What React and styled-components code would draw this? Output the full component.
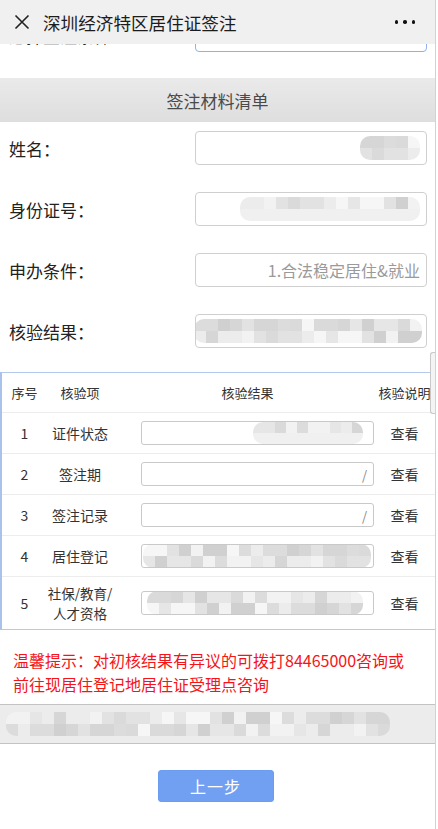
import React from "react";
import styled, { createGlobalStyle } from "styled-components";

const Global = createGlobalStyle`
  html, body { margin: 0; padding: 0; background: #fff; }
  body { font-family: "Noto Sans CJK SC", "Noto Sans", sans-serif; color: #222; }
  * { box-sizing: border-box; }
`;

const Page = styled.div`
  position: relative;
  width: 436px;
  height: 829px;
  overflow: hidden;
  border-right: 1px solid #d2d2d2;
  background: #fff;
`;

const Header = styled.div`
  position: absolute;
  top: 0;
  left: 0;
  right: 0;
  height: 44px;
  background: #f0f0f0;
  display: flex;
  align-items: center;
  padding: 0 14px;
  z-index: 5;
`;

const Title = styled.div`
  margin-left: 13px;
  font-size: 17.6px;
  color: #1c1c1c;
  flex: 1;
`;

const Dots = styled.div`
  display: flex;
  gap: 5px;
  margin-right: 6px;
`;

const Dot = styled.span`
  width: 3.5px;
  height: 3.5px;
  border-radius: 50%;
  background: #111;
`;

const Content = styled.div`
  padding-top: 18px;
`;

const FormRow = styled.div`
  display: flex;
  align-items: center;
  height: 34px;
  padding: 0 8px 0 9px;
`;

const Label = styled.div`
  width: 186px;
  font-size: 17px;
  color: #222;
`;

const Field = styled.div`
  flex: 1;
  height: 34px;
  border: 1px solid ${(p) => (p.$focus ? "#8fb0ea" : "#cfcfcf")};
  border-radius: 4px;
  display: flex;
  align-items: center;
  justify-content: flex-end;
  padding: 0 ${(p) => p.$pr ?? 6}px 0 ${(p) => p.$pl ?? 6}px;
  font-size: 16px;
  color: #9a9a9a;
  overflow: hidden;
`;

const Section = styled.div`
  margin-top: 26px;
  height: 44px;
  background: linear-gradient(#eaeaea, #dedede);
  display: flex;
  align-items: center;
  justify-content: center;
  font-size: 17px;
  color: #4a4a4a;
`;

const FormList = styled.div`
  display: flex;
  flex-direction: column;
  gap: 27px;
  padding-top: 9px;
`;

const Table = styled.div`
  margin-top: 24px;
  border-top: 1px solid #b3c9ee;
  border-bottom: 1px solid #b3c9ee;
  border-left: 2px solid #a9c2ec;
`;

const TRow = styled.div`
  display: grid;
  grid-template-columns: 45px 66px 261px 1fr;
  align-items: center;
  height: ${(p) => p.$h || 41}px;
  border-top: ${(p) => (p.$first ? "none" : "1px solid #ececec")};
  font-size: 14px;
  color: #333;
`;

const Cell = styled.div`
  text-align: center;
  padding-left: ${(p) => p.$pl || 0}px;
  line-height: ${(p) => p.$lh || "normal"};
  font-size: ${(p) => p.$fs || 14}px;
`;

const BoxCell = styled.div`
  padding-left: 28px;
`;

const Box = styled.div`
  height: 24px;
  border: 1px solid #c9c9c9;
  border-radius: 3px;
  display: flex;
  align-items: center;
  justify-content: flex-end;
  padding: 0 ${(p) => p.$pr ?? 6}px 0 ${(p) => p.$pl ?? 6}px;
  color: #888;
  font-size: 13px;
  overflow: hidden;
`;

const Notice = styled.div`
  padding: 18px 22px 8px 13px;
  color: #f5141a;
  font-size: 16px;
  line-height: 24px;
`;

const GreyBar = styled.div`
  height: 40px;
  background: #ececec;
  border-top: 1px solid #c3c3c3;
  border-bottom: 1px solid #c3c3c3;
  display: flex;
  align-items: center;
  padding-left: 6px;
`;

const ButtonWrap = styled.div`
  display: flex;
  justify-content: center;
  padding-top: 26px;
  padding-right: 4px;
`;

const Button = styled.button`
  width: 116px;
  height: 32px;
  border: 1px solid #6a9cf0;
  border-radius: 3px;
  background: #719ff1;
  color: #fff;
  font-family: inherit;
  font-size: 16px;
  letter-spacing: 1px;
`;

const Scroll = styled.div`
  position: absolute;
  right: 0;
  top: 352px;
  width: 5px;
  height: 62px;
  border: 1px solid #c8c8c8;
  border-right: none;
  border-radius: 3px 0 0 3px;
  background: #f4f4f4;
`;

const MosaicGrid = styled.div`
  display: grid;
  grid-auto-flow: column;
  grid-template-rows: repeat(${(p) => p.$rows}, ${(p) => p.$cell}px);
  grid-auto-columns: ${(p) => p.$cell}px;
  filter: blur(0.6px);
  border-radius: 10px;
  overflow: hidden;
  flex: none;
`;

const Tile = styled.div`
  background: ${(p) => p.$c};
`;

const shades = ["#e2e2e2", "#d6d6d6", "#ececec", "#dcdcdc", "#f2f2f2", "#d0d0d0", "#e6e6e6", "#f6f6f6", "#dadada"];

function Mosaic({ cols, rows = 2, cell = 12, seed = 1, light }) {
  const tiles = [];
  for (let i = 0; i < cols * rows; i++) {
    const k = (i * 7 + seed * 5 + ((i * i) % 5)) % shades.length;
    let c = shades[k];
    if (light && i % rows === rows - 1) c = "#f0f0f0";
    tiles.push(<Tile key={i} $c={c} />);
  }
  return (
    <MosaicGrid $rows={rows} $cell={cell}>
      {tiles}
    </MosaicGrid>
  );
}

function XIcon() {
  return (
    <svg width="16" height="16" viewBox="0 0 16 16">
      <path d="M1.5 1.5 L14.5 14.5 M14.5 1.5 L1.5 14.5" stroke="#222" strokeWidth="1.6" fill="none" />
    </svg>
  );
}

const rows = [
  { n: 1, name: "证件状态", box: <Box $pr={10}><Mosaic cols={10} rows={2} cell={11} seed={3} light /></Box> },
  { n: 2, name: "签注期", box: <Box>/</Box> },
  { n: 3, name: "签注记录", box: <Box>/</Box> },
  { n: 4, name: "居住登记", box: <Box $pr={2} $pl={6}><Mosaic cols={19} rows={2} cell={12} seed={5} /></Box> },
];

export default function App() {
  return (
    <>
      <Global />
      <Page>
        <Header>
          <XIcon />
          <Title>深圳经济特区居住证签注</Title>
          <Dots>
            <Dot />
            <Dot />
            <Dot />
          </Dots>
        </Header>
        <Content>
          <FormRow>
            <Label>选择签注条件：</Label>
            <Field $focus />
          </FormRow>
          <Section>签注材料清单</Section>
          <FormList>
            <FormRow>
              <Label>姓名：</Label>
              <Field>
                <Mosaic cols={5} rows={2} cell={12} seed={2} />
              </Field>
            </FormRow>
            <FormRow>
              <Label>身份证号：</Label>
              <Field>
                <Mosaic cols={15} rows={2} cell={12} seed={4} light />
              </Field>
            </FormRow>
            <FormRow>
              <Label>申办条件：</Label>
              <Field>1.合法稳定居住&amp;就业</Field>
            </FormRow>
            <FormRow>
              <Label>核验结果：</Label>
              <Field $pl={0} $pr={4}>
                <Mosaic cols={19} rows={2} cell={12} seed={6} />
              </Field>
            </FormRow>
          </FormList>
          <Table>
            <TRow $first $h={39}>
              <Cell $fs={13}>序号</Cell>
              <Cell $fs={13}>核验项</Cell>
              <Cell $fs={13} $pl={8}>核验结果</Cell>
              <Cell $fs={13}>核验说明</Cell>
            </TRow>
            {rows.map((r) => (
              <TRow key={r.n}>
                <Cell>{r.n}</Cell>
                <Cell>{r.name}</Cell>
                <BoxCell>{r.box}</BoxCell>
                <Cell>查看</Cell>
              </TRow>
            ))}
            <TRow $h={53}>
              <Cell>5</Cell>
              <Cell $fs={13.5} $lh="20px">
                社保/教育/
                <br />
                人才资格
              </Cell>
              <BoxCell>
                <Box $pl={2} $pr={10}>
                  <Mosaic cols={18} rows={2} cell={12} seed={7} />
                </Box>
              </BoxCell>
              <Cell>查看</Cell>
            </TRow>
          </Table>
          <Notice>
            温馨提示：对初核结果有异议的可拨打84465000咨询或前往现居住登记地居住证受理点咨询
          </Notice>
          <GreyBar>
            <Mosaic cols={32} rows={2} cell={12} seed={8} />
          </GreyBar>
          <ButtonWrap>
            <Button>上一步</Button>
          </ButtonWrap>
        </Content>
        <Scroll />
      </Page>
    </>
  );
}
